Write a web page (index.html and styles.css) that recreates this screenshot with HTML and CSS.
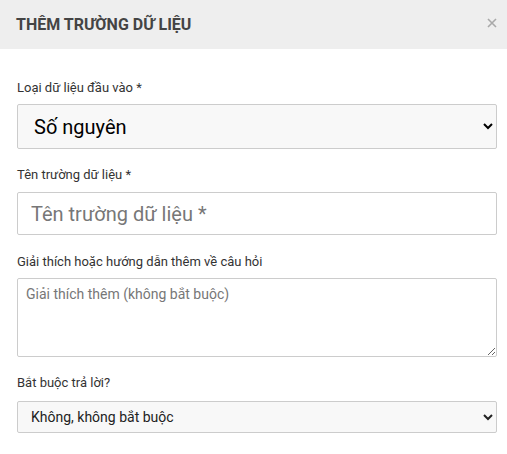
FILE: index.html
```html
<!DOCTYPE html>
<html lang="vi">
<head>
<meta charset="utf-8">
<link rel="stylesheet" href="styles.css">
</head>
<body>
<div class="modal">
  <div class="modal-header">
    <h4 class="modal-title">THÊM TRƯỜNG DỮ LIỆU</h4>
    <span class="close" aria-label="Đóng">
      <svg width="10" height="10" viewBox="0 0 10 10"><path d="M1 1 L9 9 M9 1 L1 9" stroke="#a9a9a9" stroke-width="1.6" fill="none"/></svg>
    </span>
  </div>
  <div class="modal-body">
    <div class="group">
      <label class="label">Loại dữ liệu đầu vào *</label>
      <select class="select select-lg">
        <option>Số nguyên</option>
      </select>
    </div>
    <div class="group group-wide">
      <label class="label label-wide">Tên trường dữ liệu *</label>
      <input class="input input-lg" type="text" placeholder="Tên trường dữ liệu *">
    </div>
    <div class="group">
      <label class="label">Giải thích hoặc hướng dẫn thêm về câu hỏi</label>
      <textarea class="textarea" placeholder="Giải thích thêm (không bắt buộc)"></textarea>
    </div>
    <div class="group group-last">
      <label class="label label-wider">Bắt buộc trả lời?</label>
      <select class="select select-sm">
        <option>Không, không bắt buộc</option>
      </select>
    </div>
    <div class="group">
      <label class="label">Giá trị tối thiểu</label>
    </div>
  </div>
</div>
</body>
</html>
```

FILE: styles.css
```css
* { box-sizing: border-box; }
html, body {
  margin: 0;
  padding: 0;
  background: #fff;
  font-family: Roboto, "Noto Sans", Arial, sans-serif;
  overflow: hidden;
}
.modal {
  width: 507px;
}
.modal-header {
  height: 49px;
  background: #eeeeee;
  display: flex;
  align-items: center;
  justify-content: space-between;
  padding: 0 10px 0 16px;
}
.modal-title {
  margin: 0;
  font-size: 16px;
  font-weight: 700;
  color: #444;
}
.close {
  display: flex;
  width: 10px;
  height: 10px;
  margin-top: -4px;
}
.modal-body {
  padding: 30px 10px 0 17px;
}
.group {
  margin-bottom: 17px;
}
.group-wide {
  margin-bottom: 18px;
}
.group-last {
  margin-bottom: 19px;
}
.label {
  display: block;
  font-size: 13px;
  line-height: 18px;
  color: #333;
  margin-bottom: 7px;
}
.label-wide {
  margin-bottom: 8px;
}
.label-wider {
  margin-bottom: 9px;
}
.select {
  display: block;
  width: 100%;
  background-color: #f8f8f8;
  border: 1px solid #cccccc;
  border-radius: 2px;
  color: #111;
  font-family: Roboto, "Noto Sans", Arial, sans-serif;
}
.select-lg {
  height: 45px;
  font-size: 20px;
  padding: 0 8px 0 12px;
  color: #000;
}
.select-sm {
  height: 32px;
  font-size: 14px;
  padding: 0 8px 0 9px;
  color: #222;
}
.input {
  display: block;
  width: 100%;
  border: 1px solid #cccccc;
  border-radius: 2px;
  background: #fff;
  font-family: Roboto, "Noto Sans", Arial, sans-serif;
}
.input-lg {
  height: 43px;
  font-size: 20px;
  padding: 0 13px;
}
.input::placeholder, .textarea::placeholder {
  color: #777;
  opacity: 1;
}
.textarea {
  display: block;
  width: 100%;
  height: 79px;
  border: 1px solid #cccccc;
  border-radius: 2px;
  padding: 7px 8px;
  font-size: 14px;
  line-height: 16px;
  font-family: Roboto, "Noto Sans", Arial, sans-serif;
  resize: vertical;
}
```
